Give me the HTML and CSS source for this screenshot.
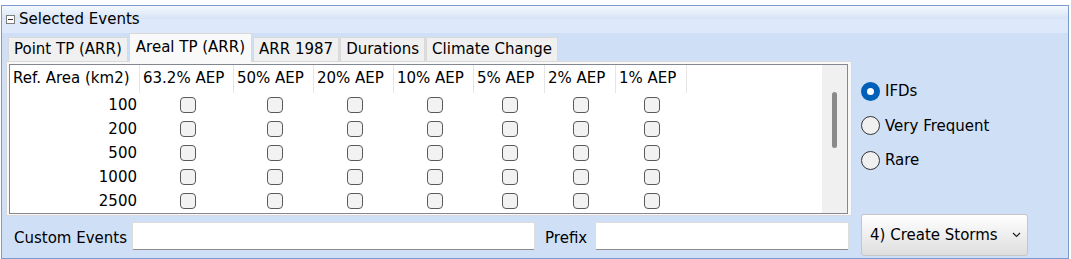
FILE: index.html
```html
<!DOCTYPE html>
<html lang="en">
<head>
    <meta charset="UTF-8">
    <title>Selected Events</title>
    <link rel="stylesheet" href="styles.css">
</head>
<body>
<div class="panel">
    <div class="panel-head">
        <svg class="collapse-icon" width="9" height="9" viewBox="0 0 9 9">
            <rect x="0.5" y="0.5" width="8" height="8" fill="#fff" stroke="#7d7d7d"/>
            <line x1="2" y1="4.5" x2="7" y2="4.5" stroke="#333"/>
        </svg>
        <span>Selected Events</span>
    </div>
    <div class="panel-body">
        <div class="left">
            <div class="tabs">
                <div class="tab">Point TP (ARR)</div>
                <div class="tab active">Areal TP (ARR)</div>
                <div class="tab">ARR 1987</div>
                <div class="tab">Durations</div>
                <div class="tab">Climate Change</div>
            </div>
            <div class="tab-panel">
                <div class="grid">
                    <div class="grid-table" id="grid-table">
                        <div class="row head">
                            <div class="cell c1">Ref. Area (km2)</div>
                            <div class="cell c2">63.2% AEP</div>
                            <div class="cell c3">50% AEP</div>
                            <div class="cell c3">20% AEP</div>
                            <div class="cell c3">10% AEP</div>
                            <div class="cell c4">5% AEP</div>
                            <div class="cell c4">2% AEP</div>
                            <div class="cell c4">1% AEP</div>
                        </div>
                    </div>
                    <div class="scrollbar"><div class="thumb"></div></div>
                </div>
            </div>
            <div class="fields">
                <label class="field-label" for="customEvents">Custom Events</label>
                <input type="text" id="customEvents" class="text-box wide">
                <label class="field-label prefix" for="prefix">Prefix</label>
                <input type="text" id="prefix" class="text-box narrow">
            </div>
        </div>
        <div class="right">
            <label class="radio-row"><input type="radio" name="source" checked><span>IFDs</span></label>
            <label class="radio-row"><input type="radio" name="source"><span>Very Frequent</span></label>
            <label class="radio-row"><input type="radio" name="source"><span>Rare</span></label>
            <button class="storm-button">
                <span>4) Create Storms</span>
                <svg width="9" height="6" viewBox="0 0 9 6"><polyline points="1,1 4.5,4.5 8,1" fill="none" stroke="#222" stroke-width="1.2"/></svg>
            </button>
        </div>
    </div>
</div>

<script>
    var areas = [100, 200, 500, 1000, 2500];
    var columns = ["c2", "c3", "c3", "c3", "c4", "c4", "c4"];
    var table = document.getElementById("grid-table");

    areas.forEach(function(area) {
        var row = document.createElement("div");
        row.className = "row";
        var html = '<div class="cell c1 num">' + area + '</div>';
        columns.forEach(function(col) {
            html += '<div class="cell ' + col + ' check"><input type="checkbox"></div>';
        });
        row.innerHTML = html;
        table.appendChild(row);
    });
</script>
</body>
</html>
```

FILE: styles.css
```css
body {
    margin: 0;
    padding: 5px 0 0 1px;
    font-family: "DejaVu Sans", Verdana, sans-serif;
    font-size: 15px;
    color: #000;
}
.panel {
    box-sizing: border-box;
    width: 1068px;
    height: 254px;
    border: 1px solid #7b9bcc;
    background-color: #cfdff5;
    display: flex;
    flex-direction: column;
}
.panel-head {
    height: 27px;
    display: flex;
    align-items: center;
    padding-left: 4px;
    padding-bottom: 1px;
    box-sizing: border-box;
    background: linear-gradient(to bottom, #f4f8fd 0px, #d6e4f6 13px, #dde9fa 13px, #dde9fa 27px);
}
.collapse-icon {
    margin-right: 4px;
}
.panel-body {
    display: flex;
    flex: 1;
    padding-left: 4px;
}
.left {
    width: 846px;
    display: flex;
    flex-direction: column;
}
.tabs {
    height: 28px;
    display: flex;
    align-items: flex-end;
    padding-left: 2px;
}
.tab {
    box-sizing: border-box;
    height: 24px;
    padding: 0 5px;
    line-height: 22px;
    background-color: #f0f0f0;
    border: 1px solid #d9d9d9;
    border-bottom: none;
    margin-right: 1px;
    white-space: nowrap;
}
.tab.active {
    height: 29px;
    line-height: 26px;
    padding: 0 6px;
    background-color: #f9f9f9;
    margin-bottom: -1px;
    position: relative;
    z-index: 1;
}
.tab-panel {
    box-sizing: border-box;
    height: 155px;
    border: 1px solid #d9d9d9;
    background-color: #f9f9f9;
    padding: 2px 3px 2px 2px;
}
.grid {
    height: 150px;
    box-sizing: border-box;
    border: 1px solid #828790;
    background-color: #fff;
    display: flex;
}
.grid-table {
    flex: 1;
}
.row {
    display: flex;
    height: 24px;
    align-items: center;
}
.row.head {
    height: 28px;
    align-items: stretch;
}
.cell {
    box-sizing: border-box;
    white-space: nowrap;
}
.head .cell {
    border-right: 1px solid #e5e5e5;
    padding-left: 3px;
    line-height: 27px;
}
.c1 { width: 130px; }
.c2 { width: 94px; }
.c3 { width: 80px; }
.c4 { width: 71px; }
.num {
    text-align: right;
    padding-right: 3px;
}
.check {
    display: flex;
    justify-content: center;
}
.check input {
    appearance: none;
    -webkit-appearance: none;
    margin: 0 0 0 1px;
    width: 16px;
    height: 16px;
    border: 1px solid #5a5a5a;
    border-radius: 4px;
    background-color: #f2f2f2;
}
.scrollbar {
    width: 25px;
    background-color: #f0f0f0;
    padding-top: 27px;
    box-sizing: border-box;
}
.thumb {
    margin-left: 10px;
    width: 5px;
    height: 56px;
    border-radius: 3px;
    background-color: #8a8a8a;
}
.fields {
    display: flex;
    align-items: center;
    padding-top: 6px;
}
.field-label {
    padding-left: 8px;
    padding-top: 3px;
    white-space: nowrap;
}
.field-label.prefix {
    padding-left: 10px;
}
.text-box {
    box-sizing: border-box;
    height: 28px;
    border: 1px solid #dcdcdc;
    border-bottom-color: #8c8c8c;
    border-radius: 2px;
    background-color: #fff;
    margin: 0;
}
.text-box.wide {
    width: 403px;
    margin-left: 5px;
}
.text-box.narrow {
    width: 254px;
    margin-left: 8px;
}
.right {
    flex: 1;
    display: flex;
    flex-direction: column;
    padding: 41px 0 2px 9px;
}
.radio-row {
    height: 34.5px;
    display: flex;
    align-items: center;
}
.radio-row input {
    appearance: none;
    -webkit-appearance: none;
    margin: 0 5px 0 0;
    width: 19px;
    height: 19px;
    border: 1px solid #333;
    border-radius: 50%;
    background-color: #f0f0f0;
    box-sizing: border-box;
}
.radio-row input:checked {
    border: 6px solid #005fb8;
    background-color: #fff;
}
.storm-button {
    margin-top: auto;
    width: 167px;
    height: 42px;
    box-sizing: border-box;
    display: flex;
    align-items: center;
    justify-content: space-between;
    padding: 0 6px 1px 8px;
    font-family: inherit;
    font-size: 15px;
    border: 1px solid #c6c6c6;
    border-radius: 3px;
    background: linear-gradient(to bottom, #ffffff, #dedede);
    color: #000;
}
```
